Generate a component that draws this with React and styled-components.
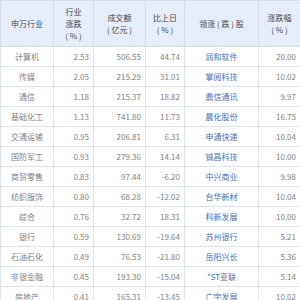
import React from "react";
import styled, { createGlobalStyle } from "styled-components";

const Global = createGlobalStyle`
  html, body { margin: 0; padding: 0; background: #ffffff; }
  body { font-family: "Noto Sans CJK SC", "Noto Sans", sans-serif; }
`;

const Table = styled.table`
  width: 300px;
  table-layout: fixed;
  border-collapse: collapse;
  font-size: 8px;
  color: #808080;
`;

const HeadCell = styled.th`
  height: 45px;
  padding: 0 2px;
  background: #e5eef8;
  border: 1px solid #d3dce6;
  color: #4a4a4a;
  font-weight: normal;
  line-height: 12px;
  text-align: center;
  vertical-align: middle;
  white-space: pre;
`;

const Cell = styled.td`
  height: 19px;
  padding: 0 ${(p) => (p.$align === "right" ? "4px" : "2px")};
  border: 1px solid #dde3ea;
  text-align: ${(p) => p.$align || "center"};
  vertical-align: middle;
  white-space: nowrap;
  line-height: 12px;
  color: ${(p) => (p.$link ? "#4470b6" : "#838383")};
`;

const cols = [53, 40, 52, 39, 74, 42];

const headers = [
  ["申万行业"],
  ["行业", "涨跌", "( % )"],
  ["成交额", "( 亿元 )"],
  ["比上日", "( % )"],
  ["领涨 ( 跌 ) 股"],
  ["涨跌幅", "( % )"],
];

const rows = [
  ["计算机", "2.53", "506.55", "44.74", "润和软件", "20.00"],
  ["传媒", "2.05", "215.29", "31.01", "掌阅科技", "10.02"],
  ["通信", "1.18", "215.37", "18.82", "鼎信通讯", "9.97"],
  ["基础化工", "1.13", "741.80", "11.73", "晨化股份", "16.75"],
  ["交通运输", "0.95", "206.81", "6.31", "申通快递", "10.04"],
  ["国防军工", "0.93", "279.36", "14.14", "铖昌科技", "10.00"],
  ["商贸零售", "0.83", "97.44", "-6.20", "中兴商业", "9.98"],
  ["纺织服饰", "0.80", "68.28", "-12.02", "台华新材", "10.04"],
  ["综合", "0.76", "32.72", "18.31", "科新发展", "10.00"],
  ["银行", "0.59", "130.69", "-19.64", "苏州银行", "5.21"],
  ["石油石化", "0.49", "76.53", "-21.80", "岳阳兴长", "5.36"],
  ["非银金融", "0.45", "193.30", "-15.04", "*ST亚联", "5.14"],
  ["房地产", "0.41", "165.31", "-13.45", "广宇发展", "10.02"],
];

export default function App() {
  return (
    <>
      <Global />
      <Table>
        <colgroup>
          {cols.map((w, i) => (
            <col key={i} style={{ width: w }} />
          ))}
        </colgroup>
        <thead>
          <tr>
            {headers.map((h, i) => (
              <HeadCell key={i}>
                {h.map((line, j) => (
                  <div key={j}>{line}</div>
                ))}
              </HeadCell>
            ))}
          </tr>
        </thead>
        <tbody>
          {rows.map((r, i) => (
            <tr key={i}>
              <Cell>{r[0]}</Cell>
              <Cell $align="right">{r[1]}</Cell>
              <Cell $align="right">{r[2]}</Cell>
              <Cell $align="right">{r[3]}</Cell>
              <Cell $link>{r[4]}</Cell>
              <Cell $align="right">{r[5]}</Cell>
            </tr>
          ))}
        </tbody>
      </Table>
    </>
  );
}
